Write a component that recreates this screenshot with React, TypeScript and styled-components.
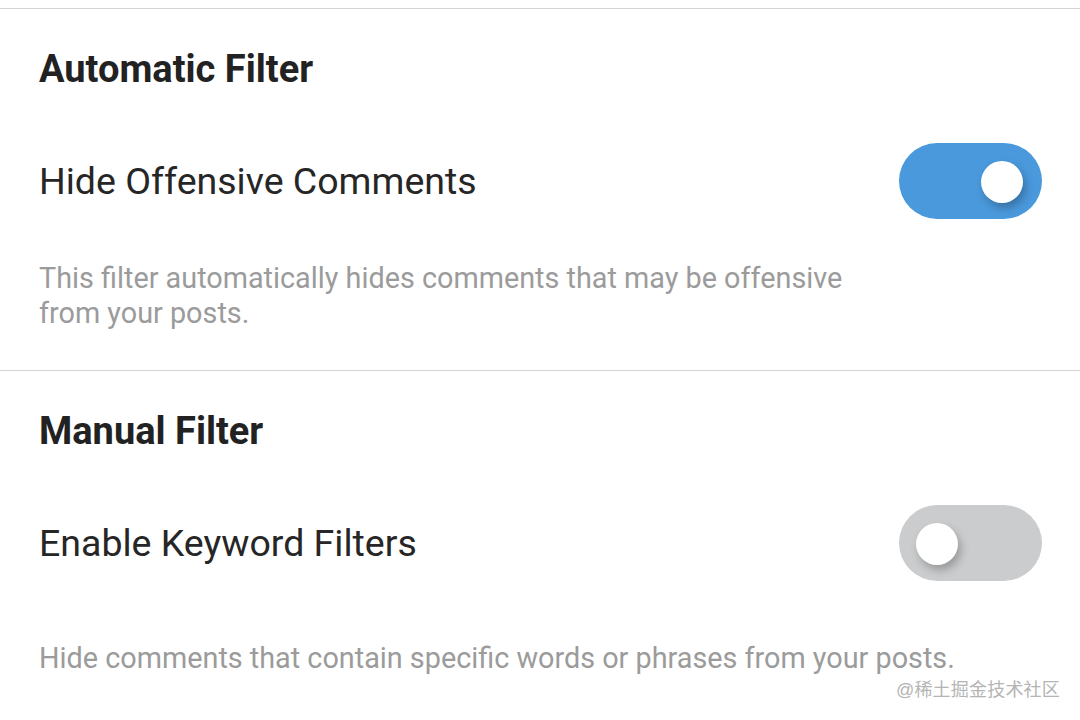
import React, { useState } from 'react';
import styled, { createGlobalStyle } from 'styled-components';

const GlobalStyle = createGlobalStyle`
  html, body {
    margin: 0;
    padding: 0;
    background: #ffffff;
  }
  body {
    font-family: Roboto, "Noto Sans", "Liberation Sans", sans-serif;
    -webkit-font-smoothing: antialiased;
  }
`

const Page = styled.div`
  position: relative;
  width: 1080px;
  height: 720px;
  overflow: hidden;
  padding-top: 8px;
  box-sizing: border-box;
`

const Section = styled.section`
  border-top: 1px solid #d3d3d3;
  padding: 0 38px 0 39px;
`

const Heading = styled.h2`
  margin: 0;
  height: 120px;
  display: flex;
  align-items: center;
  font-size: 38px;
  font-weight: 700;
  color: #222222;
`

const Row = styled.div`
  height: 104px;
  display: flex;
  align-items: center;
  justify-content: space-between;
`

const Label = styled.span`
  font-size: 37.5px;
  color: #262626;
`

const Description = styled.p<{ $width?: number; $gap?: number }>`
  margin: ${p => p.$gap ?? 28}px 0 0;
  padding-bottom: 39px;
  max-width: ${p => (p.$width ? `${p.$width}px` : 'none')};
  font-size: 28.8px;
  line-height: 35px;
  color: #9b9b9b;
`

const Track = styled.button<{ $on: boolean }>`
  position: relative;
  width: 143px;
  height: 76px;
  border: none;
  border-radius: 38px;
  padding: 0;
  cursor: pointer;
  background: ${p => (p.$on ? '#4a99dc' : '#cbcccd')};
  transition: background 0.2s;
`

const Knob = styled.span<{ $on: boolean }>`
  position: absolute;
  top: 18px;
  left: ${p => (p.$on ? '82px' : '17px')};
  width: 42px;
  height: 42px;
  border-radius: 50%;
  background: #ffffff;
  box-shadow: 3px 5px 8px rgba(0, 0, 0, 0.25);
  transition: left 0.2s;
`

const Watermark = styled.div`
  position: absolute;
  right: 20px;
  bottom: 19px;
  font-family: "Liberation Sans", "Noto Sans CJK SC", sans-serif;
  font-size: 18px;
  color: #b4b4b4;
  letter-spacing: 0.2px;
`

function Toggle({ on, onChange }: { on: boolean; onChange: () => void }) {
  return (
    <Track $on={on} onClick={onChange} aria-pressed={on}>
      <Knob $on={on} />
    </Track>
  );
}

export default function App() {
  const [hideOffensive, setHideOffensive] = useState(true);
  const [keywords, setKeywords] = useState(false);

  return (
    <Page>
      <GlobalStyle />
      <Section>
        <Heading>Automatic Filter</Heading>
        <Row>
          <Label>Hide Offensive Comments</Label>
          <Toggle on={hideOffensive} onChange={() => setHideOffensive(v => !v)} />
        </Row>
        <Description $width={830}>
          This filter automatically hides comments that may be offensive from your posts.
        </Description>
      </Section>
      <Section>
        <Heading>Manual Filter</Heading>
        <Row>
          <Label>Enable Keyword Filters</Label>
          <Toggle on={keywords} onChange={() => setKeywords(v => !v)} />
        </Row>
        <Description $gap={46}>
          Hide comments that contain specific words or phrases from your posts.
        </Description>
      </Section>
      <Watermark>@稀土掘金技术社区</Watermark>
    </Page>
  );
}
